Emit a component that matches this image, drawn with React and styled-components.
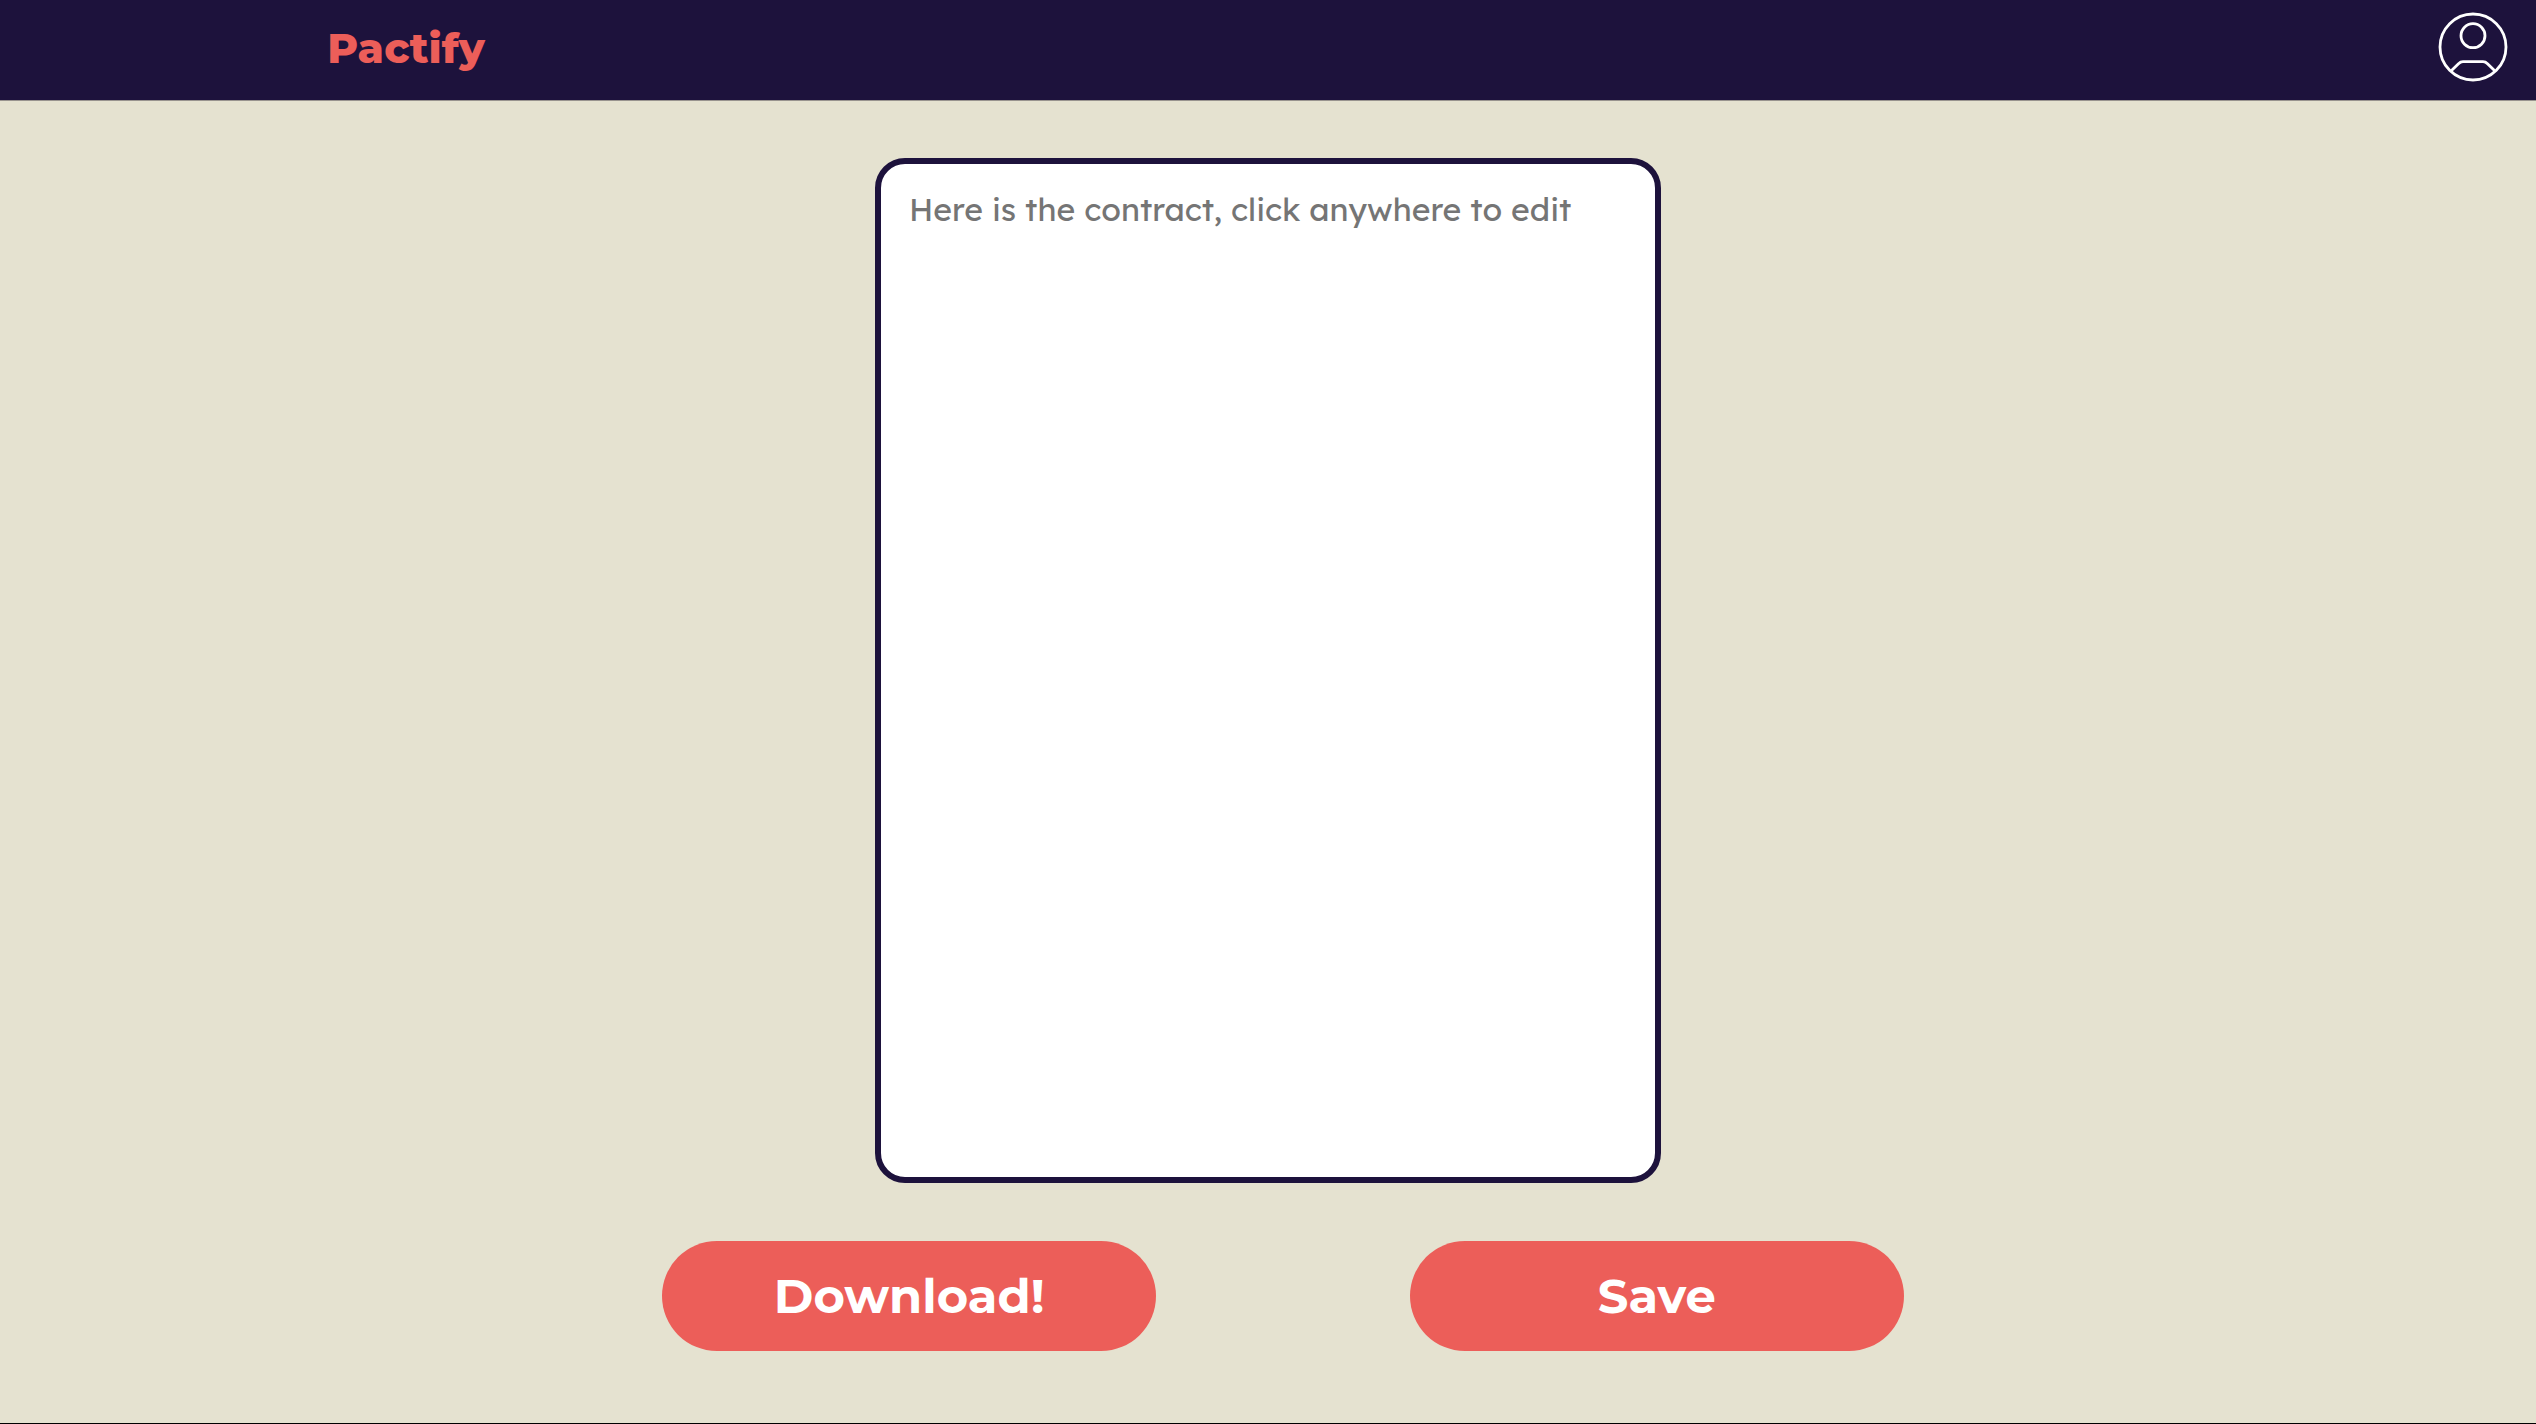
import React from "react";
import styled, { createGlobalStyle } from "styled-components";

const GlobalStyle = createGlobalStyle`
  * { box-sizing: border-box; }
  body {
    margin: 0;
    background: #000;
    font-family: "Montserrat", Inter, sans-serif;
  }
`;

const Page = styled.div`
  display: flex;
  flex-direction: column;
  min-height: calc(100vh - 2px);
  background: #e5e2d0;
`;

const Header = styled.header`
  display: flex;
  align-items: center;
  justify-content: space-between;
  height: 101px;
  padding: 0 28px 4px 12.9vw;
  background: #1d123c;
  border-bottom: 1px solid #99948f;
`;

const Brand = styled.a`
  color: #ec5e59;
  font-size: 42px;
  font-weight: 800;
  line-height: 52px;
  text-decoration: none;
`;

const ProfileButton = styled.button`
  display: flex;
  padding: 0 0 2px;
  border: 0;
  background: none;
  color: #fff;
  cursor: pointer;
`;

const Main = styled.main`
  display: flex;
  flex: 1;
  flex-direction: column;
  align-items: center;
  gap: 58px;
  padding: 57px 0 72px;
`;

const ContractField = styled.textarea`
  display: block;
  width: 31%;
  height: 72vh;
  padding: 24px 28px;
  border: 6px solid #1d123c;
  border-radius: 30px;
  outline: none;
  resize: none;
  background: #fff;
  color: #1d123c;
  font-family: "Lexend", Inter, sans-serif;
  font-size: 32px;
  font-weight: 400;
  line-height: 42px;

  &::placeholder {
    color: #757575;
    opacity: 1;
  }
`;

const Actions = styled.div`
  display: flex;
  justify-content: center;
  gap: 10vw;
  width: 100%;
  padding-left: 30px;
`;

const ActionButton = styled.button`
  width: 494px;
  height: 110px;
  padding: 0;
  border: 0;
  border-radius: 55px;
  background: #ec5e59;
  color: #fff;
  font: inherit;
  font-size: 48px;
  font-weight: 700;
  cursor: pointer;
`;

function ProfileIcon() {
  return (
    <svg width="70" height="70" viewBox="0 0 70 70" fill="none" stroke="currentColor" strokeWidth="2.8" strokeLinecap="round" strokeLinejoin="round" aria-hidden="true">
      <circle cx="35" cy="35" r="33" />
      <circle cx="35" cy="23.7" r="12" />
      <path d="M13.5 58.5 L20.5 51.7 Q22.5 49.7 25 49.7 H45 Q47.5 49.7 49.5 51.7 L56.5 58.5" />
    </svg>
  );
}

export default function App() {
  return (
    <>
      <GlobalStyle />
      <Page>
        <Header>
          <Brand href="#">Pactify</Brand>
          <ProfileButton type="button" aria-label="Profile">
            <ProfileIcon />
          </ProfileButton>
        </Header>
        <Main>
          <ContractField
            aria-label="Contract"
            placeholder="Here is the contract, click anywhere to edit"
            spellCheck={false}
          />
          <Actions>
            <ActionButton type="button">Download!</ActionButton>
            <ActionButton type="button">Save</ActionButton>
          </Actions>
        </Main>
      </Page>
    </>
  );
}
